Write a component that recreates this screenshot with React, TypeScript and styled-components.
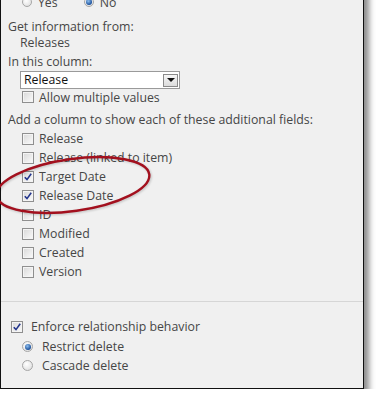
import React from 'react';
import styled, { createGlobalStyle } from 'styled-components';

const GlobalStyle = createGlobalStyle`
  html, body {
    margin: 0;
    padding: 0;
    background: #ffffff;
    overflow: hidden;
  }
  body {
    font-family: 'Open Sans', 'Liberation Sans', sans-serif;
    font-size: 12.3px;
    color: #464646;
  }
`;

const Panel = styled.div`
  position: relative;
  width: 362px;
  margin-top: -17px;
  background: #f0f0f0;
  border: 1px solid #111;
  box-shadow: 5px 6px 6px rgba(0, 0, 0, 0.45);
`;

const Section = styled.div`
  padding: 10px 0 0 7px;
`;

const RadioRow = styled.div`
  display: flex;
  align-items: center;
  height: 16px;
  padding-left: 14px;
  gap: 6px;
`;

const Label = styled.div<{ $indent?: number; $top?: number }>`
  height: 16px;
  line-height: 16px;
  white-space: nowrap;
  padding-left: ${p => p.$indent || 0}px;
  margin-top: ${p => p.$top || 0}px;
`;

const SelectBox = styled.div`
  display: flex;
  align-items: center;
  justify-content: space-between;
  box-sizing: border-box;
  width: 160px;
  height: 18px;
  margin: 1px 0 0 12px;
  padding: 0 1px 0 3px;
  background: #fff;
  border: 1px solid #9a9a9a;
  color: #111;
  line-height: 16px;
`;

const ArrowButton = styled.div`
  display: flex;
  align-items: center;
  justify-content: center;
  box-sizing: border-box;
  width: 15px;
  height: 13px;
  border: 1px solid #8a8a8a;
  background: linear-gradient(#f6f6f6, #dcdcdc);
`;

const Arrow = styled.div`
  width: 0;
  height: 0;
  border-left: 4px solid transparent;
  border-right: 4px solid transparent;
  border-top: 4px solid #111;
`;

const Option = styled.label<{ $height?: number; $indent?: number; $gap?: number }>`
  display: flex;
  align-items: center;
  height: ${p => p.$height || 19}px;
  padding-left: ${p => p.$indent ?? 14}px;
  gap: ${p => p.$gap ?? 5}px;
  white-space: nowrap;
`;

const Box = styled.span`
  position: relative;
  display: inline-block;
  box-sizing: border-box;
  width: 12px;
  height: 12px;
  flex-shrink: 0;
  border: 1px solid #8f8f8f;
  background: linear-gradient(135deg, #d8d8d8, #fbfbfb);
  box-shadow: inset 0 0 0 1px #f4f4f4;
`;

const Tick = styled.svg`
  position: absolute;
  left: 1px;
  top: 1px;
`;

const Round = styled.span<{ $size: number }>`
  position: relative;
  display: inline-flex;
  align-items: center;
  justify-content: center;
  box-sizing: border-box;
  width: ${p => p.$size}px;
  height: ${p => p.$size}px;
  flex-shrink: 0;
  border-radius: 50%;
  border: 1px solid #a6a6a6;
  background: radial-gradient(circle at 40% 35%, #ffffff, #d9d9d9);
`;

const Dot = styled.span`
  width: 6px;
  height: 6px;
  border-radius: 50%;
  background: radial-gradient(circle at 40% 35%, #8fc0f0, #1a4f9a 70%);
`;

const List = styled.div`
  margin-top: 1px;
`;

const Divider = styled.div`
  height: 1px;
  margin-top: 20px;
  background: #d6d6d6;
`;

const Bottom = styled.div`
  padding: 15px 0 13px 3px;
`;

const RadioGroup = styled.div`
  margin-top: 1px;
`;

const Ellipse = styled.svg`
  position: absolute;
  left: -10px;
  top: 166px;
  pointer-events: none;
  filter: drop-shadow(1px 1px 1px rgba(0, 0, 0, 0.2));
`;

const CheckBox: React.FC<{ checked?: boolean }> = ({ checked }) => (
  <Box>
    {checked && (
      <Tick width="8" height="8" viewBox="0 0 8 8">
        <path d="M0.8 4.2 L3 6.6 L7.2 0.8" fill="none" stroke="#22348c" strokeWidth="1.6" />
      </Tick>
    )}
  </Box>
);

const Radio: React.FC<{ checked?: boolean; size?: number }> = ({ checked, size = 11 }) => (
  <Round $size={size}>{checked && <Dot />}</Round>
);

const fields = [
  { name: 'Release', checked: false },
  { name: 'Release (linked to item)', checked: false },
  { name: 'Target Date', checked: true },
  { name: 'Release Date', checked: true },
  { name: 'ID', checked: false },
  { name: 'Modified', checked: false },
  { name: 'Created', checked: false },
  { name: 'Version', checked: false },
];

const App: React.FC = () => (
  <>
    <GlobalStyle />
    <Panel>
      <Section>
        <RadioRow>
          <Radio size={10} />
          <span>Yes</span>
          <span style={{ width: 14 }} />
          <Radio size={10} checked />
          <span>No</span>
        </RadioRow>
        <Label $top={9}>Get information from:</Label>
        <Label $indent={12}>Releases</Label>
        <Label $top={3}>In this column:</Label>
        <SelectBox>
          <span>Release</span>
          <ArrowButton>
            <Arrow />
          </ArrowButton>
        </SelectBox>
        <Option $height={16}>
          <CheckBox />
          Allow multiple values
        </Option>
        <Label $top={7}>Add a column to show each of these additional fields:</Label>
        <List>
          {fields.map(f => (
            <Option key={f.name}>
              <CheckBox checked={f.checked} />
              {f.name}
            </Option>
          ))}
        </List>
      </Section>
      <Divider />
      <Bottom>
        <Option $indent={7} $gap={8}>
          <CheckBox checked />
          Enforce relationship behavior
        </Option>
        <RadioGroup>
          <Option $indent={18} $gap={9}>
            <Radio checked />
            Restrict delete
          </Option>
          <Option $indent={18} $gap={9}>
            <Radio />
            Cascade delete
          </Option>
        </RadioGroup>
      </Bottom>
      <Ellipse width="170" height="70" viewBox="0 0 170 70">
        <ellipse
          cx="82"
          cy="35"
          rx="77"
          ry="26"
          transform="rotate(-8 82 35)"
          fill="none"
          stroke="#a3101e"
          strokeWidth="2.4"
        />
      </Ellipse>
    </Panel>
  </>
);

export default App;
